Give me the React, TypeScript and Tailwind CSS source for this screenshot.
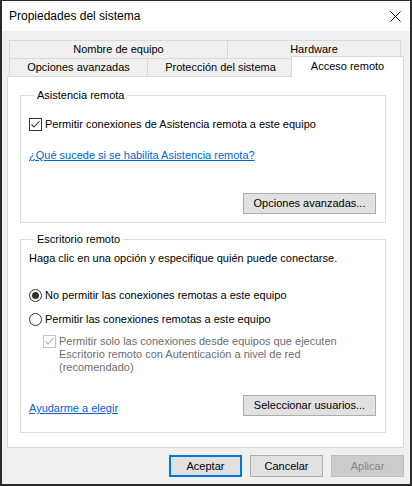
import React from 'react';

const font = "font-['Liberation_Sans',Arial,sans-serif]";

const CheckBox: React.FC<{ checked?: boolean; disabled?: boolean }> = ({ checked, disabled }) => {
  const c = disabled ? '#c4c4c4' : '#333333';
  return (
    <svg width="13" height="13" viewBox="0 0 13 13" className="shrink-0">
      <rect x="0.5" y="0.5" width="12" height="12" fill="#ffffff" stroke={c} />
      {checked && <path d="M2.5 6.5 L5 9 L10.5 3" fill="none" stroke={disabled ? '#b0b0b0' : '#333333'} strokeWidth="1.1" />}
    </svg>
  );
};

const Radio: React.FC<{ checked?: boolean }> = ({ checked }) => (
  <svg width="13" height="13" viewBox="0 0 13 13" className="shrink-0">
    <circle cx="6.5" cy="6.5" r="6" fill="#ffffff" stroke="#333333" />
    {checked && <circle cx="6.5" cy="6.5" r="3.5" fill="#333333" />}
  </svg>
);

const Btn: React.FC<{ children: React.ReactNode; className?: string }> = ({ children, className = '' }) => (
  <div className={`flex items-center justify-center border border-[#adadad] bg-[#e1e1e1] text-black ${className}`}>{children}</div>
);

const App: React.FC = () => {
  return (
    <div className={`w-[412px] h-[486px] bg-[#2b2b2b] border-t border-x-2 border-b-2 border-[#2b2b2b] ${font} text-[11px] leading-[13px] text-black`}>
      <div className="flex flex-col h-full bg-[#f0f0f0]">
        {/* barra de titulo */}
        <div className="h-[30px] bg-white flex items-center justify-between pl-[7px] pr-[9px] shrink-0">
          <span className="text-[12px] leading-[15px]">Propiedades del sistema</span>
          <svg width="11" height="11" viewBox="0 0 11 11" className="mt-[1px]">
            <path d="M0.5 0.5 L10.5 10.5 M10.5 0.5 L0.5 10.5" stroke="#000" strokeWidth="1" />
          </svg>
        </div>

        <div className="flex-1 pl-[5px] pr-[6px] pt-[9px]">
          {/* pestañas */}
          <div className="flex pl-[2px] h-[18px]">
            <div className="w-[219px] h-[18px] border-t border-x border-[#d9d9d9] flex items-center justify-center">Nombre de equipo</div>
            <div className="w-[174px] h-[18px] -ml-px border-t border-x border-[#d9d9d9] flex items-center justify-center">Hardware</div>
          </div>
          <div className="flex items-end pl-[2px] h-[18px]">
            <div className="w-[139px] h-[18px] border-t border-x border-[#d9d9d9] flex items-center justify-center">Opciones avanzadas</div>
            <div className="w-[147px] h-[18px] -ml-px border-t border-x border-[#d9d9d9] flex items-center justify-center">Protección del sistema</div>
            <div className="relative z-10 w-[113px] h-[21px] -ml-[3px] -mb-px bg-white border-t border-x border-[#d9d9d9] flex items-start justify-center pt-[3px]">Acceso remoto</div>
          </div>

          {/* panel */}
          <div className="h-[372px] bg-white border border-[#d9d9d9] pl-[12px] pr-[17px] pt-[12px]">
            <fieldset className="border border-[#dcdcdc] pl-[8px] pr-[9px] pb-[8px]">
              <legend className="ml-[5px] px-[3px] leading-[13px]">Asistencia remota</legend>
              <div className="mt-[16px] flex items-center gap-[3px] h-[13px]">
                <CheckBox checked />
                <span>Permitir conexiones de Asistencia remota a este equipo</span>
              </div>
              <div className="mt-[18px] h-[13px]">
                <span className="text-[#0066cc] underline">¿Qué sucede si se habilita Asistencia remota?</span>
              </div>
              <div className="mt-[31px] flex justify-end">
                <Btn className="w-[133px] h-[21px]">Opciones avanzadas...</Btn>
              </div>
            </fieldset>

            <fieldset className="mt-[10px] border border-[#dcdcdc] pl-[8px] pr-[9px] pb-[16px]">
              <legend className="ml-[5px] px-[3px] leading-[13px]">Escritorio remoto</legend>
              <div className="mt-[6px] h-[13px]">Haga clic en una opción y especifique quién puede conectarse.</div>
              <div className="mt-[24px] flex items-center gap-[3px] h-[13px]">
                <Radio checked />
                <span>No permitir las conexiones remotas a este equipo</span>
              </div>
              <div className="mt-[11px] flex items-center gap-[3px] h-[13px]">
                <Radio />
                <span>Permitir las conexiones remotas a este equipo</span>
              </div>
              <div className="mt-[9px] flex items-start gap-[3px] pl-[14px] text-[#6d6d6d]">
                <CheckBox checked disabled />
                <span className="whitespace-nowrap">
                  Permitir solo las conexiones desde equipos que ejecuten
                  <br />
                  Escritorio remoto con Autenticación a nivel de red
                  <br />
                  (recomendado)
                </span>
              </div>
              <div className="mt-[21px] flex items-end justify-between">
                <span className="text-[#0066cc] underline mb-[1px]">Ayudarme a elegir</span>
                <Btn className="w-[133px] h-[21px]">Seleccionar usuarios...</Btn>
              </div>
            </fieldset>
          </div>

          {/* botones */}
          <div className="mt-[7px] flex justify-end gap-[8px]">
            <div className="w-[73px] h-[22px] border-2 border-[#0078d7] bg-[#e1e1e1] flex items-center justify-center">Aceptar</div>
            <Btn className="w-[73px] h-[22px]">Cancelar</Btn>
            <div className="w-[73px] h-[22px] border border-[#bfbfbf] bg-[#cccccc] text-[#838383] flex items-center justify-center">Aplicar</div>
          </div>
        </div>
      </div>
    </div>
  );
};

export default App;
